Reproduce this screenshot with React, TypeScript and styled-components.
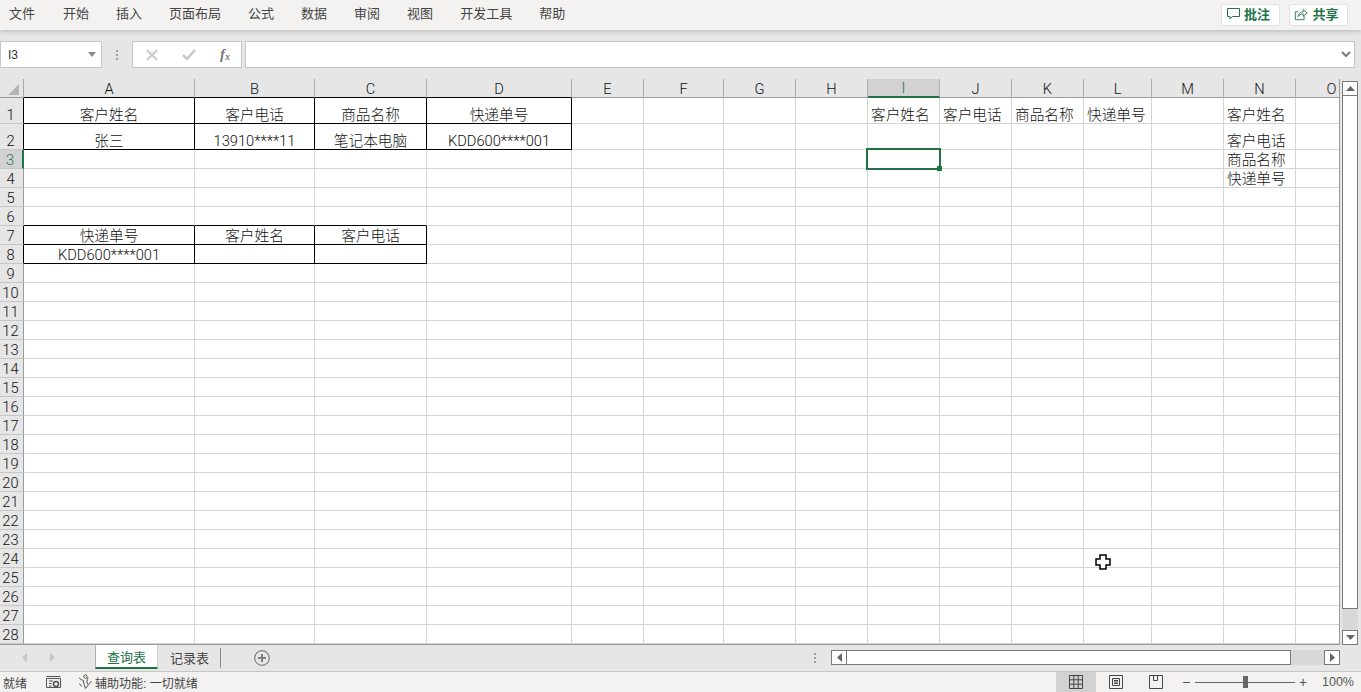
import React from "react";
import styled, { createGlobalStyle } from "styled-components";

const GREEN = "#217346";
const FONT = '"Liberation Sans", "Noto Sans CJK SC", sans-serif';
const SHEET_FONT = 'Roboto, "Noto Sans CJK SC", sans-serif';

const GlobalStyle = createGlobalStyle`
  html, body { margin: 0; padding: 0; height: 100%; overflow: hidden; background: #e6e6e6; }
  body { font-family: ${FONT}; }
  * { box-sizing: border-box; }
`;

// размеры колонок и строк, включая линию сетки
const columns = [
  { name: "A", width: 171 }, { name: "B", width: 120 }, { name: "C", width: 112 }, { name: "D", width: 145 },
  { name: "E", width: 72 }, { name: "F", width: 80 }, { name: "G", width: 72 }, { name: "H", width: 72 },
  { name: "I", width: 72 }, { name: "J", width: 72 }, { name: "K", width: 72 }, { name: "L", width: 68 },
  { name: "M", width: 72 }, { name: "N", width: 72 }, { name: "O", width: 72 },
];
const rows = Array.from({ length: 28 }, (_, i) => (i < 2 ? 26 : 19));

const menuItems = ["文件", "开始", "插入", "页面布局", "公式", "数据", "审阅", "视图", "开发工具", "帮助"];

type CellValue = { text: string; center?: boolean };
const cells: Record<string, CellValue> = {
  A1: { text: "客户姓名", center: true },
  B1: { text: "客户电话", center: true },
  C1: { text: "商品名称", center: true },
  D1: { text: "快递单号", center: true },
  A2: { text: "张三", center: true },
  B2: { text: "13910****11", center: true },
  C2: { text: "笔记本电脑", center: true },
  D2: { text: "KDD600****001", center: true },
  A7: { text: "快递单号", center: true },
  B7: { text: "客户姓名", center: true },
  C7: { text: "客户电话", center: true },
  A8: { text: "KDD600****001", center: true },
  I1: { text: "客户姓名" },
  J1: { text: "客户电话" },
  K1: { text: "商品名称" },
  L1: { text: "快递单号" },
  N1: { text: "客户姓名" },
  N2: { text: "客户电话" },
  N3: { text: "商品名称" },
  N4: { text: "快递单号" },
};

const tables = [
  { r1: 1, r2: 2, c1: 0, c2: 3 },
  { r1: 7, r2: 8, c1: 0, c2: 2 },
];
const inTable = (r: number, c: number) =>
  tables.some((t) => r >= t.r1 && r <= t.r2 && c >= t.c1 && c <= t.c2);

const GRID_LINE = "#d4d4d4";
const rightLine = (r: number, c: number) => (inTable(r, c) || inTable(r, c + 1) ? "#000" : GRID_LINE);
const bottomLine = (r: number, c: number) => (inTable(r, c) || inTable(r + 1, c) ? "#000" : GRID_LINE);

const App: React.FC = () => {
  return (
    <Page>
      <GlobalStyle />
      <MenuBar>
        <MenuList>
          {menuItems.map((item) => (
            <MenuItem key={item}>{item}</MenuItem>
          ))}
        </MenuList>
        <MenuActions>
          <ActionButton>
            <svg width="13" height="12" viewBox="0 0 13 12" fill="none" stroke={GREEN} strokeWidth="1">
              <path d="M.5.500h12v8H5.500l-2.500 2.500V8.500H.5z" />
            </svg>
            批注
          </ActionButton>
          <ActionButton>
            <svg width="14" height="14" viewBox="0 0 16 16" fill="none" stroke={GREEN} strokeWidth="1">
              <path d="M5 5.500H1.500v9h10V10" />
              <path d="M4.500 11c.5-3.500 3-5.500 6-5.500V3l4.500 3.800-4.500 3.700V8c-2.500 0-4.500 1-6 3z" />
            </svg>
            共享
          </ActionButton>
        </MenuActions>
      </MenuBar>

      <FormulaBar>
        <NameBox>
          I3
          <svg width="8" height="5" viewBox="0 0 8 5">
            <path d="M0 0h8L4 5z" fill="#8a8a8a" />
          </svg>
        </NameBox>
        <GripDots />
        <FormulaButtons>
          <svg width="12" height="12" viewBox="0 0 12 12" stroke="#c8c8c8" strokeWidth="2" fill="none">
            <path d="M1 1l10 10M11 1L1 11" />
          </svg>
          <svg width="14" height="12" viewBox="0 0 14 12" stroke="#c8c8c8" strokeWidth="2.500" fill="none">
            <path d="M1 6l4 4 8-9" />
          </svg>
          <FxLabel>
            f<sub>x</sub>
          </FxLabel>
        </FormulaButtons>
        <FormulaInput>
          <svg width="10" height="7" viewBox="0 0 10 7" fill="none" stroke="#7a7a7a" strokeWidth="2">
            <path d="M1 1l4 4 4-4" />
          </svg>
        </FormulaInput>
      </FormulaBar>

      <SheetArea>
        <GridViewport>
          <Grid>
            <CornerCell>
              <svg width="12" height="11" viewBox="0 0 12 11">
                <path d="M11 0v11H0z" fill="#b4b4b4" />
              </svg>
            </CornerCell>
            {columns.map((col, c) => (
              <ColumnHead
                key={col.name}
                $selected={col.name === "I"}
                $line={inTable(1, c) ? "#000" : "#9a9a9a"}
              >
                {col.name}
              </ColumnHead>
            ))}
            {rows.map((_, i) => {
              const r = i + 1;
              return (
                <React.Fragment key={r}>
                  <RowHead $selected={r === 3} $line={inTable(r, 0) ? "#000" : "#9a9a9a"}>
                    {r}
                  </RowHead>
                  {columns.map((col, c) => {
                    const value = cells[`${col.name}${r}`];
                    return (
                      <Cell
                        key={col.name}
                        $center={value?.center}
                        $right={rightLine(r, c)}
                        $bottom={bottomLine(r, c)}
                      >
                        {value?.text}
                        {col.name === "I" && r === 3 && (
                          <Selection>
                            <FillHandle />
                          </Selection>
                        )}
                        {col.name === "L" && r === 24 && (
                          <CrossCursor width="16" height="16" viewBox="0 0 16 16">
                            <path
                              d="M5 1h6v4h4v6h-4v4H5v-4H1V5h4z"
                              fill="#fff"
                              stroke="#000"
                              strokeWidth="1.500"
                            />
                          </CrossCursor>
                        )}
                      </Cell>
                    );
                  })}
                </React.Fragment>
              );
            })}
          </Grid>
        </GridViewport>
        <VerticalScroll>
          <ScrollButton>
            <svg width="9" height="5" viewBox="0 0 9 5">
              <path d="M0 5h9L4.500 0z" fill="#666" />
            </svg>
          </ScrollButton>
          <VerticalThumb />
          <ScrollTrack />
          <ScrollButton>
            <svg width="9" height="5" viewBox="0 0 9 5">
              <path d="M0 0h9L4.500 5z" fill="#666" />
            </svg>
          </ScrollButton>
        </VerticalScroll>
      </SheetArea>

      <TabBar>
        <TabArrows>
          <svg width="5" height="9" viewBox="0 0 5 9">
            <path d="M5 0v9L0 4.500z" fill="#c6c6c6" />
          </svg>
          <svg width="5" height="9" viewBox="0 0 5 9">
            <path d="M0 0v9l5-4.500z" fill="#c6c6c6" />
          </svg>
        </TabArrows>
        <SheetTab $active>查询表</SheetTab>
        <SheetTab>记录表</SheetTab>
        <TabDivider />
        <AddSheet>
          <svg width="16" height="16" viewBox="0 0 16 16" fill="none" stroke="#808080">
            <circle cx="8" cy="8" r="7.300" strokeWidth="1.200" />
            <path d="M8 4v8M4 8h8" strokeWidth="2" />
          </svg>
        </AddSheet>
        <HorizontalScrollWrap>
          <GripDots />
          <HorizontalScroll>
            <HScrollButton>
              <svg width="5" height="9" viewBox="0 0 5 9">
                <path d="M5 0v9L0 4.500z" fill="#666" />
              </svg>
            </HScrollButton>
            <HorizontalThumb />
            <HorizontalTrack />
            <HScrollButton>
              <svg width="5" height="9" viewBox="0 0 5 9">
                <path d="M0 0v9l5-4.500z" fill="#666" />
              </svg>
            </HScrollButton>
          </HorizontalScroll>
        </HorizontalScrollWrap>
      </TabBar>

      <StatusBar>
        <StatusLeft>
          <StatusText>就绪</StatusText>
          <svg width="15" height="14" viewBox="0 0 15 14" fill="none" stroke="#555">
            <path d="M.5 1.500h14M.5 3.500h14v9H.5zM3 6h4M3 8.500h2.500M3 11h2.500" />
            <circle cx="10" cy="9" r="2.500" strokeWidth="1.500" />
          </svg>
          <AccessGroup>
            <svg width="15" height="16" viewBox="0 0 15 16" fill="none" stroke="#555">
              <circle cx="7.500" cy="2.500" r="1.700" />
              <path d="M1 3.500c1 2 3 2.500 4.500 3l.5 4 1.500 4 6-7.500M10 3.500C9.500 5 9 6 9 7.500l.5 3M1.500 9.500l2 3" />
            </svg>
            <StatusText>辅助功能: 一切就绪</StatusText>
          </AccessGroup>
        </StatusLeft>
        <StatusRight>
          <ViewButton $active>
            <svg width="14" height="14" viewBox="0 0 14 14" fill="none" stroke="#444">
              <path d="M.5.500h13v13H.5zM.5 4.800h13M.5 9.200h13M4.800.5v13M9.200.5v13" />
            </svg>
          </ViewButton>
          <ViewButton>
            <svg width="14" height="14" viewBox="0 0 14 14" fill="none" stroke="#444">
              <path d="M.5.500h13v13H.5zM3.500 3.500h7v7h-7zM5 5.500h4M5 7h4M5 8.500h4" />
            </svg>
          </ViewButton>
          <ViewButton>
            <svg width="14" height="14" viewBox="0 0 14 14" fill="none" stroke="#444">
              <path d="M.5.500h13v13H.5zM4.500.5v5h4V.5" />
            </svg>
          </ViewButton>
          <ZoomControl>
            <ZoomSign>−</ZoomSign>
            <ZoomSlider>
              <ZoomKnob />
            </ZoomSlider>
            <ZoomSign>+</ZoomSign>
          </ZoomControl>
          <ZoomValue>100%</ZoomValue>
        </StatusRight>
      </StatusBar>
    </Page>
  );
};

export default App;

const Page = styled.div`
  width: 100vw;
  height: 100vh;
  display: flex;
  flex-direction: column;
  overflow: hidden;
  background: #e6e6e6;
  color: #222;
`;

// Меню
const MenuBar = styled.header`
  flex: 0 0 30px;
  height: 30px;
  display: flex;
  align-items: center;
  justify-content: space-between;
  padding: 0 13px 2px 9px;
  background: #f3f2f1;
  box-shadow: 0 1px 5px rgba(0, 0, 0, 0.22);
  position: relative;
  z-index: 1;
`;

const MenuList = styled.nav`
  display: flex;
  gap: 27px;
`;

const MenuItem = styled.span`
  font-size: 13px;
  color: #444;
  line-height: 20px;

  &:first-child {
    margin-right: 1px;
  }
`;

const MenuActions = styled.div`
  display: flex;
  gap: 9px;
  margin-top: 2px;
`;

const ActionButton = styled.button`
  width: 59px;
  height: 22px;
  display: flex;
  align-items: center;
  justify-content: center;
  gap: 4px;
  padding: 0 4px 3px 0;
  background: #fff;
  border: 1px solid #e3e1df;
  border-radius: 2px;
  color: ${GREEN};
  font-family: ${FONT};
  font-size: 13px;
  font-weight: 700;
`;

// Строка формул
const FormulaBar = styled.div`
  flex: 0 0 49px;
  display: flex;
  padding: 11px 6px 11px 0;
  align-items: stretch;
`;

const NameBox = styled.div`
  width: 102px;
  display: flex;
  align-items: center;
  justify-content: space-between;
  padding: 0 5px 0 7px;
  background: #fff;
  border: 1px solid #c6c6c6;
  font-size: 12px;
  color: #333;
`;

const GripDots = styled.span`
  width: 2px;
  height: 2px;
  margin: 0 14px;
  align-self: center;
  background: #a0a0a0;
  box-shadow: 0 -4px 0 #a0a0a0, 0 4px 0 #a0a0a0;
`;

const FormulaButtons = styled.div`
  width: 110px;
  display: flex;
  align-items: center;
  justify-content: space-between;
  padding: 0 11px 0 13px;
  background: #fff;
  border: 1px solid #c6c6c6;
`;

const FxLabel = styled.i`
  font-family: "Liberation Serif", serif;
  font-size: 15px;
  font-weight: 700;
  color: #777;

  sub {
    font-size: 10px;
    vertical-align: -1px;
  }
`;

const FormulaInput = styled.div`
  flex: 1;
  margin-left: 3px;
  display: flex;
  align-items: center;
  justify-content: flex-end;
  padding-right: 3px;
  background: #fff;
  border: 1px solid #c6c6c6;
`;

// Лист
const SheetArea = styled.main`
  flex: 0 0 566px;
  display: flex;
  min-height: 0;
`;

const GridViewport = styled.div`
  width: 1340px;
  overflow: hidden;
  background: #fff;
  border-right: 1px solid #9a9a9a;
  border-bottom: 1px solid #9a9a9a;
`;

const Grid = styled.div`
  display: grid;
  grid-template-columns: 24px ${columns.map((c) => `${c.width}px`).join(" ")};
  grid-template-rows: 19px ${rows.map((h) => `${h}px`).join(" ")};
  width: max-content;
  font-family: ${SHEET_FONT};
`;

const CornerCell = styled.div`
  display: flex;
  align-items: flex-end;
  justify-content: flex-end;
  padding: 0 3px 2px 0;
  background: #e6e6e6;
  border-right: 1px solid #a8a8a8;
  border-bottom: 1px solid #9a9a9a;
`;

const ColumnHead = styled.div<{ $selected?: boolean; $line: string }>`
  display: flex;
  align-items: center;
  justify-content: center;
  padding-top: 1px;
  font-size: 14.67px;
  font-weight: 300;
  color: ${(p) => (p.$selected ? GREEN : "#111")};
  background: ${(p) => (p.$selected ? "#d2d2d2" : "#e6e6e6")};
  border-right: 1px solid #b0b0b0;
  border-bottom: ${(p) => (p.$selected ? `2px solid ${GREEN}` : `1px solid ${p.$line}`)};
`;

const RowHead = styled.div<{ $selected?: boolean; $line: string }>`
  display: flex;
  align-items: flex-end;
  justify-content: center;
  padding-right: 2px;
  line-height: 16px;
  font-size: 14.67px;
  font-weight: 300;
  color: ${(p) => (p.$selected ? GREEN : "#111")};
  background: ${(p) => (p.$selected ? "#d2d2d2" : "#e6e6e6")};
  border-right: ${(p) => (p.$selected ? `2px solid ${GREEN}` : `1px solid ${p.$line}`)};
  border-bottom: 1px solid #c6c6c6;
`;

const Cell = styled.div<{ $center?: boolean; $right: string; $bottom: string }>`
  position: relative;
  display: flex;
  align-items: flex-end;
  justify-content: ${(p) => (p.$center ? "center" : "flex-start")};
  padding: 0 3px;
  font-size: 14.67px;
  font-weight: 300;
  line-height: 16px;
  white-space: nowrap;
  color: #111;
  border-right: 1px solid ${(p) => p.$right};
  border-bottom: 1px solid ${(p) => p.$bottom};
`;

const Selection = styled.div`
  position: absolute;
  top: -2px;
  left: -2px;
  right: -2px;
  bottom: -2px;
  z-index: 1;
  border: 2px solid ${GREEN};
`;

const FillHandle = styled.span`
  position: absolute;
  right: -3px;
  bottom: -3px;
  width: 5px;
  height: 5px;
  background: ${GREEN};
`;

const CrossCursor = styled.svg`
  position: absolute;
  left: 11px;
  top: 5px;
`;

// Полосы прокрутки
const VerticalScroll = styled.aside`
  width: 16px;
  margin: 2px 3px 0 2px;
  display: flex;
  flex-direction: column;
`;

const ScrollButton = styled.div`
  flex: 0 0 15px;
  display: flex;
  align-items: center;
  justify-content: center;
  background: #fff;
  border: 1px solid #7a7a7a;
`;

const VerticalThumb = styled.div`
  flex: 0 0 513px;
  background: #fff;
  border: 1px solid #7a7a7a;
  border-top: none;
`;

const ScrollTrack = styled.div`
  flex: 1;
  background: #d8d8d8;
`;

const TabBar = styled.div`
  flex: 0 0 27px;
  display: flex;
  align-items: flex-start;
  background: #e6e6e6;
  border-bottom: 1px solid #c6c6c6;
`;

const TabArrows = styled.div`
  width: 95px;
  height: 24px;
  display: flex;
  align-items: center;
  gap: 23px;
  padding-left: 22px;
`;

const SheetTab = styled.div<{ $active?: boolean }>`
  width: 63px;
  height: 24px;
  display: flex;
  align-items: center;
  justify-content: center;
  font-size: 13px;
  color: ${(p) => (p.$active ? GREEN : "#444")};
  background: ${(p) => (p.$active ? "#fff" : "transparent")};
  border-bottom: ${(p) => (p.$active ? `2px solid ${GREEN}` : "none")};
  border-left: ${(p) => (p.$active ? "1px solid #b0b0b0" : "none")};
  border-right: ${(p) => (p.$active ? "1px solid #d0d0d0" : "none")};
`;

const TabDivider = styled.span`
  width: 1px;
  height: 20px;
  margin: 3px 0 0 -1px;
  background: #8a8a8a;
`;

const AddSheet = styled.div`
  margin: 5px 0 0 33px;
  display: flex;
`;

const HorizontalScrollWrap = styled.div`
  margin-left: auto;
  display: flex;
  align-items: center;
  height: 24px;
  padding-top: 1px;
  margin-right: 21px;

  ${GripDots} {
    margin: 0 15px 0 14px;
  }
`;

const HorizontalScroll = styled.div`
  width: 509px;
  height: 15px;
  display: flex;
`;

const HScrollButton = styled.div`
  flex: 0 0 16px;
  display: flex;
  align-items: center;
  justify-content: center;
  background: #fff;
  border: 1px solid #7a7a7a;
`;

const HorizontalThumb = styled.div`
  flex: 0 0 444px;
  background: #fff;
  border: 1px solid #7a7a7a;
  border-left: none;
`;

const HorizontalTrack = styled.div`
  flex: 1;
  background: #d8d8d8;
`;

// Строка состояния
const StatusBar = styled.footer`
  flex: 1;
  display: flex;
  align-items: stretch;
  justify-content: space-between;
  background: #f3f2f1;
`;

const StatusLeft = styled.div`
  display: flex;
  align-items: center;
  padding-left: 3px;
  gap: 19px;
`;

const StatusText = styled.span`
  font-size: 12px;
  color: #444;
`;

const AccessGroup = styled.div`
  display: flex;
  align-items: center;
  gap: 2px;
  margin-left: -2px;
`;

const StatusRight = styled.div`
  display: flex;
  align-items: stretch;
  padding-right: 3px;
`;

const ViewButton = styled.div<{ $active?: boolean }>`
  width: 40px;
  display: flex;
  align-items: center;
  justify-content: center;
  background: ${(p) => (p.$active ? "#d2d2d2" : "transparent")};
`;

const ZoomControl = styled.div`
  display: flex;
  align-items: center;
  margin-left: 4px;
`;

const ZoomSign = styled.span`
  width: 12px;
  text-align: center;
  font-size: 14px;
  color: #555;
`;

const ZoomSlider = styled.div`
  position: relative;
  width: 100px;
  height: 1px;
  margin: 0 2px 0 3px;
  background: #666;
`;

const ZoomKnob = styled.span`
  position: absolute;
  left: 48px;
  top: -6px;
  width: 5px;
  height: 12px;
  background: #666;
`;

const ZoomValue = styled.span`
  align-self: center;
  width: 36px;
  margin-left: 13px;
  font-size: 12.500px;
  color: #555;
`;
